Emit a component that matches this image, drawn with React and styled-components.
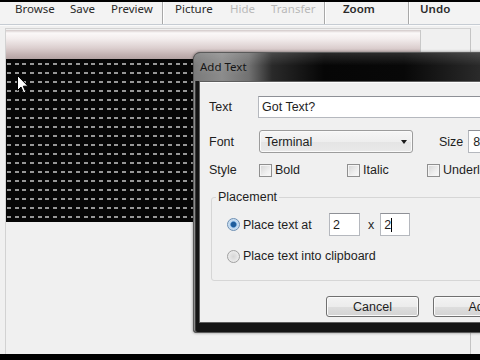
import styled, { createGlobalStyle } from "styled-components";

const GlobalStyle = createGlobalStyle`
  html, body {
    margin: 0;
    padding: 0;
    background: #000;
  }
  * {
    box-sizing: border-box;
  }
`;

const Screen = styled.div`
  position: relative;
  width: 480px;
  height: 360px;
  overflow: hidden;
  display: flex;
  flex-direction: column;
  background: #f0f0f0;
  border-top: 2px solid #000;
  font-family: "Liberation Sans", Arial, sans-serif;
  color: #1e1e1e;
`;

const Toolbar = styled.div`
  display: flex;
  align-items: flex-start;
  height: 22px;
  flex: none;
  padding-left: 15px;
  overflow: hidden;
  background: #f3f3f3;
  font-family: "Noto Sans", "Open Sans", sans-serif;
  font-size: 11.5px;
  line-height: 13px;
`;

const ToolButton = styled.div`
  flex: none;
  width: ${(p) => p.$w}px;
  color: ${(p) => (p.$disabled ? "#b9b9b9" : "#2a2a2a")};
  font-weight: ${(p) => (p.$bold ? 600 : 400)};
  white-space: nowrap;
`;

const ToolSep = styled.div`
  flex: none;
  width: 1px;
  height: 22px;
  margin-right: ${(p) => p.$gap}px;
  background: #a8a8a8;
  box-shadow: 1px 0 0 #fff;
`;

const Rule = styled.div`
  flex: none;
  height: 2px;
  border-top: 1px solid #c6ccd3;
  background: #fafafa;
`;

const Workspace = styled.div`
  position: relative;
  flex: 1;
  display: flex;
  padding: 2px 9px 0 5px;
`;

const Panel = styled.div`
  flex: 1;
  padding-top: 1px;
  border: 1px solid #d2d2d2;
  border-bottom: none;
  border-right-color: #c4c4c4;
  background: #f0f0f0;
`;

const Strip = styled.div`
  width: 415px;
  height: 29px;
  border-right: 1px solid #c8c8c8;
  background: linear-gradient(
    180deg,
    #d2c8c8 0,
    #fbf8f8 3px,
    #f3eded 30%,
    #dccfcf 62%,
    #c3b2b2 85%,
    #b3a2a2 100%
  );
`;

const Canvas = styled.div`
  position: relative;
  width: 250px;
  height: 163px;
  background-color: #060606;
  background-image: linear-gradient(180deg, #060606 0 4px, transparent 4px 6px, #060606 6px),
    linear-gradient(
      90deg,
      #979797 0 4px,
      transparent 4px 8px,
      #979797 8px 12px,
      transparent 12px 15px,
      #979797 15px 19px,
      transparent 19px
    );
  background-size: 23px 9px;
  background-position: 1px 0;
`;

const Pointer = styled.svg`
  position: absolute;
  left: 11px;
  top: 16px;
`;

const Dialog = styled.div`
  position: absolute;
  left: 193px;
  top: 26px;
  width: 350px;
  height: 281px;
  display: flex;
  flex-direction: column;
  padding-bottom: 9px;
  border: 1px solid #5a5a5a;
  border-radius: 7px 7px 3px 3px;
  background: #141414;
  box-shadow: inset 1px 0 0 #8c8c8c, inset 2px 0 0 #3a3a3a, 0 0 3px rgba(0, 0, 0, 0.45);
`;

const TitleBar = styled.div`
  flex: none;
  height: 28px;
  padding-left: 6px;
  border-radius: 6px 6px 0 0;
  background: linear-gradient(180deg, rgba(255, 255, 255, 0.14), transparent 45%),
    linear-gradient(
      90deg,
      #7a7a7a 0,
      #8c8c8c 28px,
      #717171 55px,
      #2a2a2a 78px,
      #060606 130px,
      #080808 210px,
      #2c2c2c 290px
    );
  font-family: "Noto Sans", "Open Sans", sans-serif;
  font-size: 11.5px;
  line-height: 27px;
  color: #161616;
  text-shadow: 0 0 6px rgba(255, 255, 255, 0.25);
`;

const Client = styled.div`
  flex: 1;
  margin: 0 6px 0 5px;
  padding: 14px 9px 0 9px;
  display: flex;
  flex-direction: column;
  border: 1px solid #5e5e5e;
  background: #f0f0f0;
  box-shadow: inset 0 1px 0 #fdfdfd;
  font-size: 12.5px;
`;

const Row = styled.div`
  display: flex;
  align-items: center;
  flex: none;
  height: ${(p) => p.$h}px;
  margin-top: ${(p) => p.$mt || 0}px;
  justify-content: ${(p) => (p.$end ? "flex-end" : "flex-start")};
  gap: ${(p) => p.$gap || 0}px;
`;

const Label = styled.div`
  flex: none;
  width: ${(p) => (p.$w ? `${p.$w}px` : "auto")};
  margin-left: ${(p) => p.$ml || 0}px;
  white-space: nowrap;
`;

const Field = styled.div`
  flex: ${(p) => (p.$w ? "none" : 1)};
  width: ${(p) => (p.$w ? `${p.$w}px` : "auto")};
  height: 100%;
  margin-left: ${(p) => p.$ml || 0}px;
  padding-left: ${(p) => p.$pl || 3}px;
  display: flex;
  align-items: center;
  border: 1px solid #b5b8be;
  border-top-color: #8e9096;
  background: #fff;
  white-space: nowrap;
`;

const Caret = styled.span`
  display: inline-block;
  width: 1px;
  height: 14px;
  background: #000;
`;

const Select = styled.div`
  flex: none;
  width: 154px;
  height: 100%;
  display: flex;
  align-items: center;
  justify-content: space-between;
  padding: 0 5px 0 5px;
  border: 1px solid #9c9c9c;
  border-radius: 3px;
  background: linear-gradient(180deg, #f6f6f6 0, #eeeeee 50%, #e4e4e4 51%, #e9e9e9 100%);
  box-shadow: inset 0 0 0 1px #fafafa;
`;

const Arrow = styled.span`
  width: 0;
  height: 0;
  margin-top: 1px;
  border-left: 3.5px solid transparent;
  border-right: 3.5px solid transparent;
  border-top: 4px solid #1a1a1a;
`;

const CheckItem = styled.div`
  flex: none;
  display: flex;
  align-items: center;
  gap: 3px;
  width: ${(p) => (p.$w ? `${p.$w}px` : "auto")};
  white-space: nowrap;
`;

const Box = styled.span`
  width: 13px;
  height: 13px;
  border: 1px solid #8f8f8f;
  background: linear-gradient(135deg, #d4d4d4 0, #eeeeee 60%, #fafafa 100%);
  box-shadow: inset 0 0 0 1px #f4f4f4;
`;

const Group = styled.fieldset`
  flex: none;
  margin: 13px 0 0 2px;
  padding: 0 0 13px 0;
  min-width: 0;
  border: 1px solid #d6d6d6;
  border-radius: 3px;
`;

const Legend = styled.legend`
  margin-left: 4px;
  padding: 0 2px;
  line-height: 15px;
  font-size: 12.5px;
`;

const GroupBody = styled.div`
  padding: 8px 0 0 15px;
`;

const Radio = styled.span`
  flex: none;
  width: 13px;
  height: 13px;
  margin-right: 3px;
  border-radius: 50%;
  border: 1px solid ${(p) => (p.$checked ? "#6d8fb3" : "#a0a0a0")};
  background: ${(p) =>
    p.$checked
      ? "radial-gradient(circle, #1f5d9c 0 2.2px, #4f8cc8 2.8px, #bcd6ee 3.6px, #e4eef8 100%)"
      : "radial-gradient(circle, #d6d6d6 0, #e8e8e8 60%, #f6f6f6 100%)"};
`;

const Times = styled.span`
  flex: none;
  margin: 0 6px 0 8px;
`;

const Button = styled.div`
  flex: none;
  width: 93px;
  height: 21px;
  display: flex;
  align-items: center;
  justify-content: center;
  border: 1px solid #707070;
  border-radius: 3px;
  background: linear-gradient(180deg, #f3f3f3 0, #ececec 50%, #dedede 51%, #d3d3d3 100%);
  box-shadow: inset 0 0 0 1px #fbfbfb;
`;

const BottomBar = styled.div`
  flex: none;
  height: 6px;
  background: #000;
`;

export default function App() {
  return (
    <>
      <GlobalStyle />
      <Screen>
        <Toolbar>
          <ToolButton $w={55}>Browse</ToolButton>
          <ToolButton $w={41}>Save</ToolButton>
          <ToolButton $w={51}>Preview</ToolButton>
          <ToolSep $gap={12} />
          <ToolButton $w={55}>Picture</ToolButton>
          <ToolButton $w={41} $disabled>
            Hide
          </ToolButton>
          <ToolButton $w={53} $disabled>
            Transfer
          </ToolButton>
          <ToolSep $gap={18} />
          <ToolButton $w={65} $bold>
            Zoom
          </ToolButton>
          <ToolSep $gap={11} />
          <ToolButton $w={50} $bold>
            Undo
          </ToolButton>
        </Toolbar>
        <Rule />
        <Workspace>
          <Panel>
            <Strip />
            <Canvas>
              <Pointer width="12" height="19" viewBox="0 0 12 19">
                <path
                  d="M0.5 0.5 L0.5 15.5 L4 12 L6.6 18 L8.8 17 L6.3 11.2 L11 11.2 Z"
                  fill="#fff"
                  stroke="#000"
                  strokeWidth="1"
                  strokeLinejoin="round"
                />
              </Pointer>
            </Canvas>
          </Panel>

          <Dialog>
            <TitleBar>Add Text</TitleBar>
            <Client>
              <Row $h={22}>
                <Label $w={49}>Text</Label>
                <Field>Got Text?</Field>
              </Row>
              <Row $h={23} $mt={12}>
                <Label $w={50}>Font</Label>
                <Select>
                  Terminal
                  <Arrow />
                </Select>
                <Label $ml={26}>Size</Label>
                <Field $ml={5} $pl={4}>
                  8
                </Field>
              </Row>
              <Row $h={14} $mt={10}>
                <Label $w={50}>Style</Label>
                <CheckItem $w={88}>
                  <Box />
                  Bold
                </CheckItem>
                <CheckItem $w={80}>
                  <Box />
                  Italic
                </CheckItem>
                <CheckItem>
                  <Box />
                  Underline
                </CheckItem>
              </Row>
              <Group>
                <Legend>Placement</Legend>
                <GroupBody>
                  <Row $h={23}>
                    <Radio $checked />
                    <Label $w={86}>Place text at</Label>
                    <Field $w={31}>2</Field>
                    <Times>x</Times>
                    <Field $w={30}>
                      2<Caret />
                    </Field>
                  </Row>
                  <Row $h={22} $mt={9}>
                    <Radio />
                    <Label>Place text into clipboard</Label>
                  </Row>
                </GroupBody>
              </Group>
              <Row $h={21} $mt={15} $end $gap={14}>
                <Button>Cancel</Button>
                <Button>Add</Button>
              </Row>
            </Client>
          </Dialog>
        </Workspace>
        <BottomBar />
      </Screen>
    </>
  );
}
